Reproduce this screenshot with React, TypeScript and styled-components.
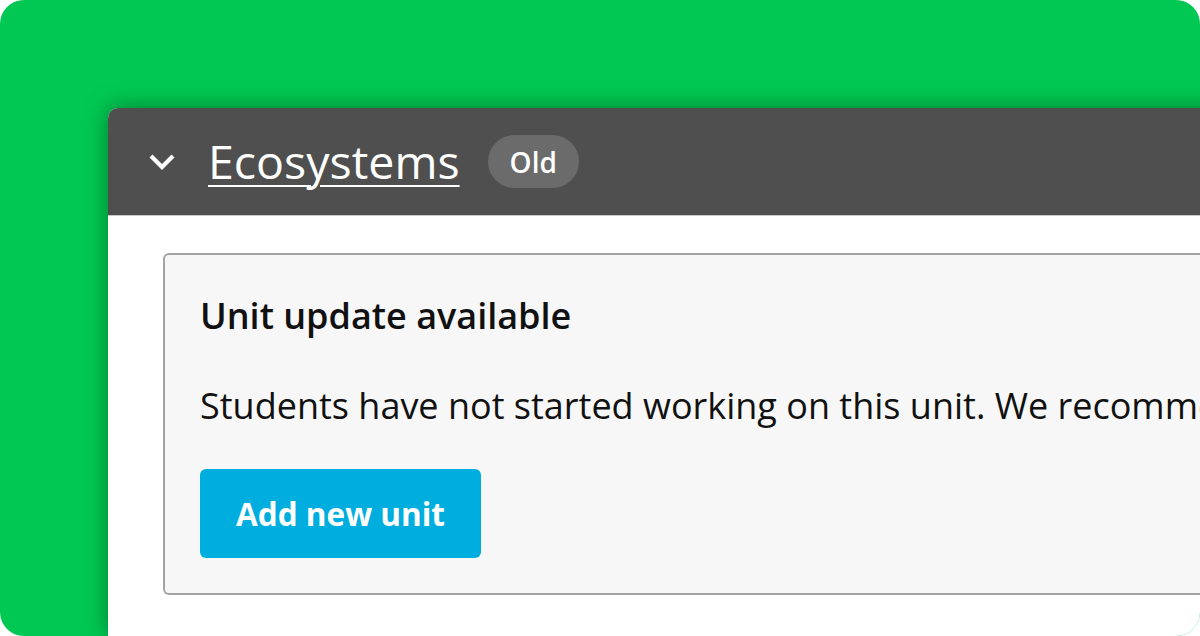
import styled, { createGlobalStyle } from 'styled-components';

const GlobalStyle = createGlobalStyle`
  html, body {
    margin: 0;
    padding: 0;
    background: #ffffff;
  }
  body {
    font-family: "Open Sans", "Noto Sans", sans-serif;
  }
`;

const Stage = styled.div`
  width: 1200px;
  height: 636px;
  background: #00c853;
  border-radius: 24px;
  overflow: hidden;
  padding: 108px 0 0 108px;
  box-sizing: border-box;
  display: flex;
`;

const Panel = styled.section`
  flex: 1;
  min-width: 0;
  margin-right: -40px;
  display: flex;
  flex-direction: column;
  background: #ffffff;
  border-radius: 10px 0 0 0;
  box-shadow: 0 0 22px rgba(0, 60, 20, 0.55);
`;

const Header = styled.header`
  height: 107px;
  display: flex;
  align-items: center;
  padding-left: 40px;
  background: #4f4f4f;
  border-radius: 10px 0 0 0;
  border-bottom: 1px solid #c8c8c8;
`;

const Toggle = styled.button`
  all: unset;
  width: 28px;
  height: 28px;
  display: flex;
  align-items: center;
  justify-content: center;
  margin-right: 32px;
  cursor: pointer;
`;

const Title = styled.a`
  color: #ffffff;
  font-size: 46.5px;
  line-height: 1.2;
  text-decoration: underline;
  text-decoration-thickness: 2px;
  text-underline-offset: 6px;
  margin-right: 28px;
`;

const Badge = styled.span`
  height: 53px;
  padding: 0 22px;
  display: inline-flex;
  align-items: center;
  border-radius: 27px;
  background: #6b6b6b;
  color: #ffffff;
  font-size: 28px;
  font-weight: 600;
`;

const Body = styled.div`
  padding: 37px 0 0 55px;
`;

const Notice = styled.div`
  background: #f7f7f7;
  border: 2px solid #a3a3a3;
  border-right: none;
  border-radius: 6px 0 0 6px;
  padding: 36px 0 35px 35px;
  overflow: hidden;
`;

const NoticeTitle = styled.h3`
  margin: 0;
  font-size: 36px;
  font-weight: 600;
  line-height: 50px;
  color: #111111;
`;

const NoticeText = styled.p`
  margin: 40px 0 0;
  font-size: 36px;
  font-weight: 400;
  line-height: 50px;
  color: #111111;
  white-space: nowrap;
`;

const PrimaryButton = styled.button`
  display: block;
  margin-top: 38px;
  width: 281px;
  height: 89px;
  border: none;
  border-radius: 6px;
  background: #00addf;
  color: #ffffff;
  font-family: inherit;
  font-size: 31.5px;
  font-weight: 700;
  cursor: pointer;
`;

const Chevron = () => (
  <svg width="28" height="18" viewBox="0 0 28 18" fill="none">
    <path d="M3 3l11 11L25 3" stroke="#ffffff" strokeWidth="4.2" />
  </svg>
);

export default function App() {
  return (
    <>
      <GlobalStyle />
      <Stage>
        <Panel>
          <Header>
            <Toggle aria-label="Collapse">
              <Chevron />
            </Toggle>
            <Title href="#">Ecosystems</Title>
            <Badge>Old</Badge>
          </Header>
          <Body>
            <Notice>
              <NoticeTitle>Unit update available</NoticeTitle>
              <NoticeText>
                Students have not started working on this unit. We recommend adding the new version.
              </NoticeText>
              <PrimaryButton>Add new unit</PrimaryButton>
            </Notice>
          </Body>
        </Panel>
      </Stage>
    </>
  );
}
